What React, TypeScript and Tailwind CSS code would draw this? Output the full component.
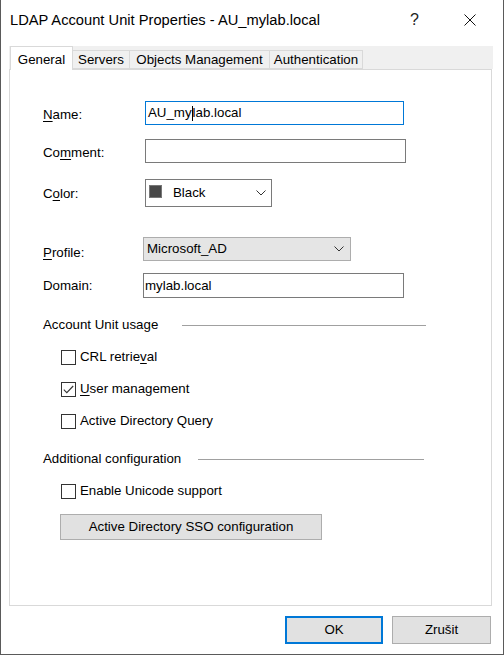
import React from "react";

const font = { fontFamily: '"Liberation Sans", Arial, sans-serif' };

function Chevron() {
  return (
    <svg width="10" height="6" viewBox="0 0 10 6" className="shrink-0">
      <polyline points="0.5,0.5 5,5 9.5,0.5" fill="none" stroke="#333" strokeWidth="1" />
    </svg>
  );
}

function Check({ checked, children }: { checked?: boolean; children: React.ReactNode }) {
  return (
    <div className="flex items-center h-[16px] ml-[18px]">
      <div className="w-[15px] h-[15px] border border-[#333] bg-white flex items-center justify-center shrink-0">
        {checked && (
          <svg width="11" height="9" viewBox="0 0 11 9">
            <polyline points="0.8,4.6 3.8,7.6 10.2,1" fill="none" stroke="#333" strokeWidth="1.1" />
          </svg>
        )}
      </div>
      <span className="ml-[4px] text-[13.3px] text-black leading-none">{children}</span>
    </div>
  );
}

export default function App() {
  return (
    <div
      className="w-[504px] h-[655px] bg-white border-l border-r border-b border-[#5a5a5a] flex flex-col overflow-hidden"
      style={font}
    >
      {/* Title bar */}
      <div className="h-[40px] flex items-center shrink-0">
        <span className="ml-[9px] text-[14.7px] text-black">LDAP Account Unit Properties - AU_mylab.local</span>
        <div className="flex-1" />
        <span className="text-[16px] text-[#222] mr-[45px]">?</span>
        <svg width="12" height="12" viewBox="0 0 12 12" className="mr-[27px]">
          <line x1="0.5" y1="0.5" x2="11.5" y2="11.5" stroke="#111" strokeWidth="1" />
          <line x1="11.5" y1="0.5" x2="0.5" y2="11.5" stroke="#111" strokeWidth="1" />
        </svg>
      </div>

      {/* Tabs */}
      <div className="mt-[6px] ml-[8px] w-[484px] h-[23px] bg-[#f0f0f0] flex items-end relative z-10 shrink-0">
        <div className="ml-[1px] w-[63px] h-[24px] -mb-px bg-white border border-b-0 border-[#d9d9d9] flex items-start justify-center pt-[3px] text-[13.3px] text-black">
          General
        </div>
        <div className="w-[57px] h-[19px] bg-[#f0f0f0] border border-l-0 border-[#d9d9d9] flex items-center justify-center text-[13.3px] text-black">
          Servers
        </div>
        <div className="w-[140px] h-[19px] bg-[#f0f0f0] border border-l-0 border-[#d9d9d9] flex items-center justify-center text-[13.3px] text-black">
          Objects Management
        </div>
        <div className="w-[93px] h-[19px] bg-[#f0f0f0] border border-l-0 border-[#d9d9d9] flex items-center justify-center text-[13.3px] text-black">
          Authentication
        </div>
      </div>

      {/* Panel */}
      <div className="ml-[8px] w-[483px] h-[537px] border border-[#d9d9d9] bg-white flex flex-col pl-[33px] shrink-0">
        {/* Name */}
        <div className="mt-[31px] flex items-center h-[24px]">
          <span className="w-[102px] text-[13.3px] text-black pt-[4px]">
            <u className="underline-offset-2">N</u>ame:
          </span>
          <div className="w-[259px] h-[24px] border border-[#0078d7] flex items-center pl-[2px] text-[13.3px] text-black">
            AU_my
            <span className="inline-block w-px h-[15px] bg-black" />
            lab.local
          </div>
        </div>
        {/* Comment */}
        <div className="mt-[14px] flex items-center h-[24px]">
          <span className="w-[102px] text-[13.3px] text-black pt-[4px]">
            Co<u className="underline-offset-2">m</u>ment:
          </span>
          <div className="w-[261px] h-[24px] border border-[#7a7a7a]" />
        </div>
        {/* Color */}
        <div className="mt-[16px] flex items-center h-[28px]">
          <span className="w-[102px] text-[13.3px] text-black pt-[1px]">
            C<u className="underline-offset-2">o</u>lor:
          </span>
          <div className="w-[127px] h-[28px] border border-[#7a7a7a] flex items-center pl-[3px] pr-[5px]">
            <div className="w-[13px] h-[13px] bg-[#484848] border border-[#777] -mt-[4px]" />
            <span className="ml-[11px] text-[13.3px] text-black">Black</span>
            <div className="flex-1" />
            <Chevron />
          </div>
        </div>
        {/* Profile */}
        <div className="mt-[30px] flex items-center h-[24px]">
          <span className="w-[100px] text-[13.3px] text-black pt-[8px]">
            <u className="underline-offset-2">P</u>rofile:
          </span>
          <div className="w-[208px] h-[24px] border border-[#adadad] bg-[#e5e5e5] flex items-center pl-[3px] pr-[6px]">
            <span className="text-[13.3px] text-black">Microsoft_AD</span>
            <div className="flex-1" />
            <Chevron />
          </div>
        </div>
        {/* Domain */}
        <div className="mt-[12px] flex items-center h-[25px]">
          <span className="w-[100px] text-[13.3px] text-black pt-[1px]">Domain:</span>
          <div className="w-[261px] h-[25px] border border-[#7a7a7a] flex items-center pl-[1px] text-[13.3px] text-black">
            mylab.local
          </div>
        </div>

        <div className="mt-[19px] flex items-center h-[16px] w-[383px]">
          <span className="text-[13.3px] text-black leading-none whitespace-nowrap">Account Unit usage</span>
          <div className="ml-[24px] flex-1 h-px bg-[#a0a0a0]" />
        </div>
        <div className="mt-[16px]">
          <Check>
            CRL retrie<u className="underline-offset-2">v</u>al
          </Check>
        </div>
        <div className="mt-[16px]">
          <Check checked>
            <u className="underline-offset-2">U</u>ser management
          </Check>
        </div>
        <div className="mt-[16px]">
          <Check>Active Directory Query</Check>
        </div>

        <div className="mt-[22px] flex items-center h-[16px] w-[381px]">
          <span className="text-[13.3px] text-black leading-none whitespace-nowrap">Additional configuration</span>
          <div className="ml-[17px] flex-1 h-px bg-[#a0a0a0]" />
        </div>
        <div className="mt-[16px]">
          <Check>Enable Unicode support</Check>
        </div>
        <div className="mt-[15px] ml-[17px] w-[262px] h-[26px] bg-[#e1e1e1] border border-[#adadad] flex items-center justify-center text-[13.3px] text-black">
          Active Directory SSO configuration
        </div>
      </div>

      {/* Buttons */}
      <div className="mt-[10px] flex justify-end pr-[12px] gap-[9px] shrink-0">
        <div className="w-[98px] h-[28px] bg-[#e1e1e1] border-2 border-[#0078d7] flex items-center justify-center text-[13.3px] text-black">
          OK
        </div>
        <div className="w-[99px] h-[28px] bg-[#e1e1e1] border border-[#adadad] flex items-center justify-center text-[13.3px] text-black">
          Zrušit
        </div>
      </div>
    </div>
  );
}
